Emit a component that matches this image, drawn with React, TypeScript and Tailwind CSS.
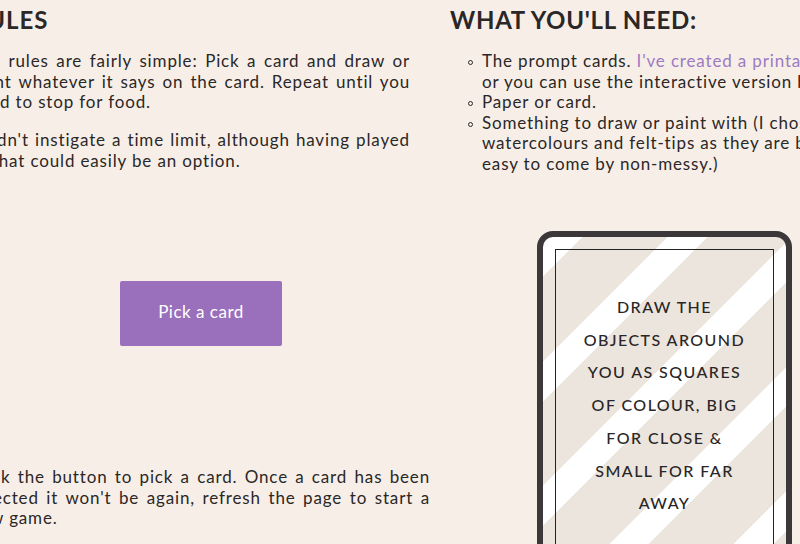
const body = "font-['Lato','Liberation_Sans',sans-serif]";

function JLine({ children }: { children: React.ReactNode }) {
  return <span className="block whitespace-nowrap text-justify [text-align-last:justify]">{children}</span>;
}

function Bullet({ children }: { children: React.ReactNode }) {
  return (
    <li className="relative">
      <span className="absolute left-[-14px] top-[9px] h-[5px] w-[5px] rounded-full border border-[#2b2727]" />
      {children}
    </li>
  );
}

export default function App() {
  return (
    <div className={`h-[544px] w-[800px] overflow-hidden bg-[#f7efe7] text-[#2b2727] ${body}`}>
      <div className="ml-[-30px] w-[960px]">
        {/* top row */}
        <div className="flex h-[231px] gap-10">
          <section className="w-[440px]">
            <h2 className="ml-[1px] mt-2 text-[24px] font-bold leading-none tracking-[0.04em]">RULES</h2>
            <div className="mt-[19px] text-[17px] leading-[20.5px] tracking-[0.05em]">
              <p>
                <JLine>The rules are fairly simple: Pick a card and draw or</JLine>
                <JLine>paint whatever it says on the card. Repeat until you</JLine>
                <span className="block">need to stop for food.</span>
              </p>
              <p className="mt-[17.5px]">
                <JLine>I didn't instigate a time limit, although having played</JLine>
                <span className="block">it, that could easily be an option.</span>
              </p>
            </div>
          </section>
          <section className="w-[480px]">
            <h2 className="mt-2 text-[24px] font-bold leading-none tracking-[0.03em]">WHAT YOU'LL NEED:</h2>
            <ul className="mt-[19px] pl-8 text-[17px] leading-[20.5px] tracking-[0.05em]">
              <Bullet>
                <span className="block whitespace-nowrap">
                  The prompt cards. <span className="text-[#9c7bc2]">I've created a printable version</span>
                </span>
                <span className="block whitespace-nowrap">or you can use the interactive version below.</span>
              </Bullet>
              <Bullet>Paper or card.</Bullet>
              <Bullet>
                <span className="block whitespace-nowrap">Something to draw or paint with (I chose</span>
                <span className="block whitespace-nowrap">watercolours and felt-tips as they are both</span>
                <span className="block whitespace-nowrap">easy to come by non-messy.)</span>
              </Bullet>
            </ul>
          </section>
        </div>

        {/* bottom row */}
        <div className="flex">
          <div className="w-[460px]">
            <button className="ml-[150px] mt-[50px] flex h-[65px] w-[162px] items-center justify-center rounded-[2px] bg-[#9a6fbb] pb-[3px] text-[17px] tracking-[0.03em] text-white">
              Pick a card
            </button>
            <p className="mt-[121px] text-[17px] leading-[20.5px] tracking-[0.05em]">
              <JLine>Click the button to pick a card. Once a card has been</JLine>
              <JLine>selected it won't be again, refresh the page to start a</JLine>
              <span className="block">new game.</span>
            </p>
          </div>
          <div className="ml-[107px] h-[360px] w-[255px] rounded-[16px] border-[6px] border-[#3c383a] bg-[repeating-linear-gradient(135deg,#ffffff_0px,#ffffff_28px,#ece5dd_28px,#ece5dd_88px)] p-3">
            <div className="h-full border border-[#222]">
              <p className="pt-[41px] text-center text-[16px] font-medium leading-[32.7px] tracking-[0.09em] text-[#2a2526]">
                DRAW THE
                <br />
                OBJECTS AROUND
                <br />
                YOU AS SQUARES
                <br />
                OF COLOUR, BIG
                <br />
                FOR CLOSE &amp;
                <br />
                SMALL FOR FAR
                <br />
                AWAY
              </p>
            </div>
          </div>
        </div>
      </div>
    </div>
  );
}
